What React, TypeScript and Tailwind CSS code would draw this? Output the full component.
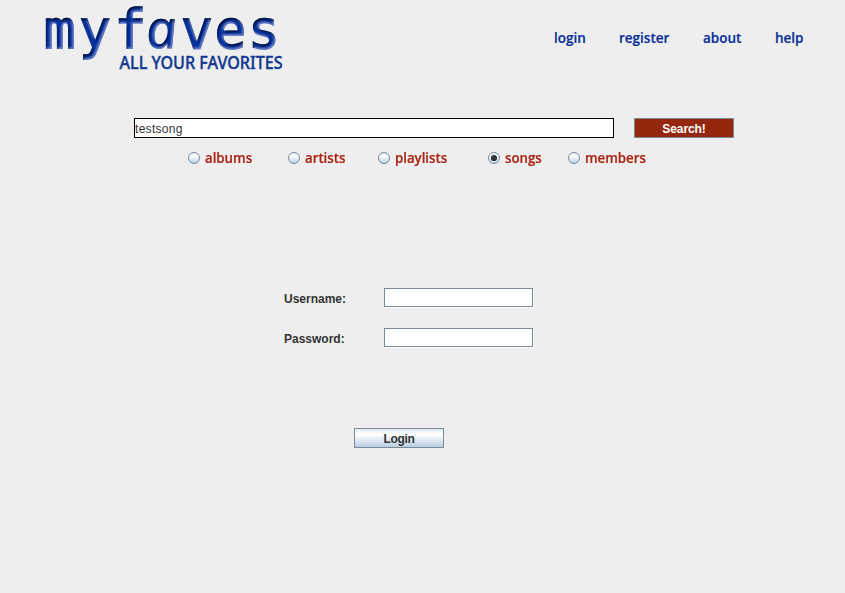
import React from 'react';

const sans = "font-['Liberation_Sans',Arial,sans-serif]";
const human = "font-['Open_Sans','Noto_Sans',sans-serif] font-semibold text-[13.5px] leading-5 [-webkit-text-stroke:0.2px_currentColor]";

function Logo() {
  return (
    <svg width="250" height="80" viewBox="40 0 250 80" className="block shrink-0 overflow-visible" role="img" aria-label="myfaves">
      <defs>
        <filter id="bevel" filterUnits="userSpaceOnUse" x="36" y="0" width="256" height="80">
          <feOffset in="SourceAlpha" dx="1.4" dy="1.6" result="o" />
          <feGaussianBlur in="o" stdDeviation="0.9" result="b" />
          <feComposite in="SourceAlpha" in2="b" operator="out" result="edge" />
          <feFlood floodColor="#000a20" result="dark" />
          <feComposite in="dark" in2="edge" operator="in" result="shade" />
          <feOffset in="SourceAlpha" dx="-0.8" dy="-1" result="o2" />
          <feGaussianBlur in="o2" stdDeviation="0.9" result="b2" />
          <feComposite in="SourceAlpha" in2="b2" operator="out" result="edge2" />
          <feFlood floodColor="#7f9be0" floodOpacity="0.8" result="light" />
          <feComposite in="light" in2="edge2" operator="in" result="glow" />
          <feMerge>
            <feMergeNode in="SourceGraphic" />
            <feMergeNode in="glow" />
            <feMergeNode in="shade" />
          </feMerge>
        </filter>
      </defs>
      <g fill="#0436a0" stroke="#0436a0" filter="url(#bevel)">
        <text y="47.8" fontFamily="DejaVu Sans Mono, monospace" fontSize="53" strokeWidth="1.4">
          <tspan x="43.8">m</tspan>
          <tspan x="79">y</tspan>
          <tspan x="114.5">f</tspan>
        </text>
        <text transform="translate(148 47.8) skewX(7) scale(1.02 1)" fontFamily="Noto Sans, sans-serif" fontStyle="italic" fontSize="53" strokeWidth="0.9">a</text>
        <text x="181" y="47.8" fontFamily="DejaVu Sans Mono, monospace" fontSize="53" strokeWidth="1.4" textLength="99" lengthAdjust="spacing">ves</text>
      </g>
      <text x="119.5" y="69" fill="#123a90" stroke="#123a90" fontFamily="Noto Sans, sans-serif" fontSize="18" fontWeight="500" strokeWidth="0.4" textLength="163" lengthAdjust="spacingAndGlyphs">ALL YOUR FAVORITES</text>
    </svg>
  );
}

const links: [string, string][] = [
  ['login', 'w-[65px]'],
  ['register', 'w-[84px]'],
  ['about', 'w-[72px]'],
  ['help', 'w-[40px]'],
];

const kinds: [string, string][] = [
  ['albums', 'w-[100px]'],
  ['artists', 'w-[90px]'],
  ['playlists', 'w-[110px]'],
  ['songs', 'w-[80px]'],
  ['members', 'w-[90px]'],
];

function Radio({ on }: { on: boolean }) {
  return (
    <svg width="12" height="12" viewBox="0 0 12 12" className="shrink-0">
      <defs>
        <linearGradient id="orb" x1="0" y1="0" x2="0" y2="1">
          <stop offset="0" stopColor="#dde8f3" />
          <stop offset="0.3" stopColor="#ffffff" />
          <stop offset="1" stopColor="#b8cfe5" />
        </linearGradient>
      </defs>
      <circle cx="6" cy="6" r="5.5" fill="url(#orb)" stroke="#7a8a99" />
      {on && <circle cx="6" cy="6" r="3.1" fill="#333333" />}
    </svg>
  );
}

function Field({ label }: { label: string }) {
  return (
    <label className="flex h-5 items-center">
      <span className="w-[100px] pt-0.5 text-xs font-bold text-[#333333]">{label}</span>
      <span className="block h-5 w-[150px] border-r border-b border-white">
        <input className="block h-[19px] w-[149px] border border-[#7a8a99] bg-white px-1 text-xs outline-none" />
      </span>
    </label>
  );
}

export default function App() {
  const [kind, setKind] = React.useState('songs');
  return (
    <div className={`h-[593px] w-[845px] overflow-hidden bg-[#eeeeee] ${sans}`}>
      <header className="flex h-20 pl-10">
        <Logo />
        <nav className={`ml-[264px] mt-7 flex text-[#0a2f9c] ${human}`}>
          {links.map(([name, width]) => (
            <a key={name} className={`${width} h-5`}>
              <span>{name}</span>
            </a>
          ))}
        </nav>
      </header>
      <form className="mt-[38px] flex gap-5 pl-[134px]">
        <input defaultValue="testsong" className="h-5 w-[480px] border border-black bg-white p-0 pt-px text-xs tracking-[0.3px] text-[#333333] outline-none" />
        <button type="button" className="h-5 w-[100px] border border-[#7a8a99] bg-[#95270f] pt-px text-xs leading-4 font-bold tracking-[-0.1px] text-white">Search!</button>
      </form>
      <div className="mt-2.5 flex pl-[188px]">
        {kinds.map(([name, width]) => (
          <button key={name} type="button" onClick={() => setKind(name)} className={`${width} flex h-5 items-center gap-[5px] text-[#ab2313] ${human}`}>
            <Radio on={kind === name} />
            <span className="origin-left scale-x-[0.98]">{name}</span>
          </button>
        ))}
      </div>
      <div className="mt-[120px] flex flex-col gap-5 pl-[284px]">
        <Field label="Username:" />
        <Field label="Password:" />
      </div>
      <button type="button" className="ml-[354px] mt-20 block h-5 w-[90px] border border-[#7a8a99] bg-linear-to-b from-[#dde8f3] via-white via-30% to-[#b8cfe5] pt-0.5 text-xs leading-4 font-bold tracking-[-0.3px] text-[#333333]">Login</button>
    </div>
  );
}
